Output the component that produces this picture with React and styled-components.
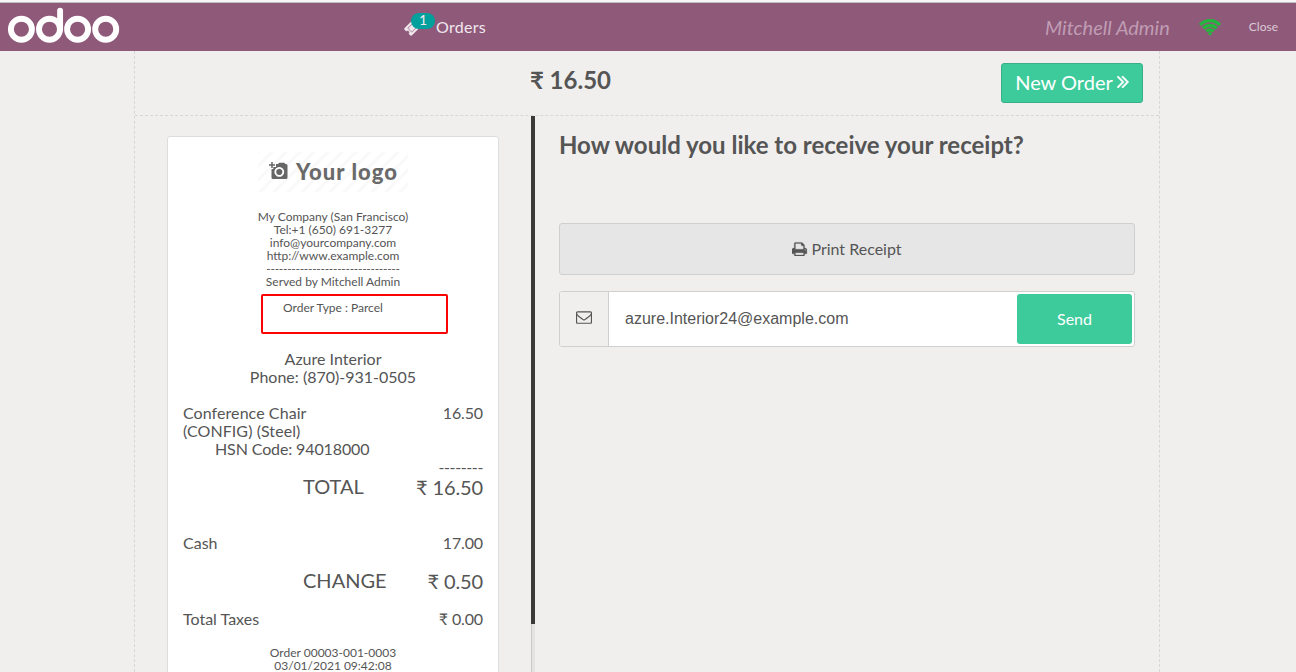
import React from "react";
import styled, { createGlobalStyle } from "styled-components";

const GlobalStyle = createGlobalStyle`
  *, *::before, *::after { box-sizing: border-box; }
  body {
    margin: 0;
    overflow: hidden;
    background: #f0efed;
    color: #555;
    font-family: Lato, "Liberation Sans", sans-serif;
    font-size: 16px;
  }
  button, input { font: inherit; color: inherit; margin: 0; }
`;

const Page = styled.div`
  display: flex;
  flex-direction: column;
  height: 672px;
  overflow: hidden;
  border-top: 2px solid #f6f6f8;
`;

const TopBar = styled.header`
  flex: none;
  display: flex;
  align-items: center;
  height: 49px;
  padding: 0 18px 0 8px;
  background: #8f597a;
  border-top: 1px solid #c0bfc0;
  color: #f0e8ed;
`;

const Logo = styled.svg`
  flex: none;
  width: 112px;
  height: 36px;
  margin: 0 284px 4px 0;
`;

const OrdersButton = styled.div`
  position: relative;
  display: flex;
  align-items: center;
  gap: 5px;
  width: 90px;
  margin-right: auto;
  line-height: 20px;
  white-space: nowrap;
`;

const OrdersLabel = styled.span`
  margin-left: 9px;
  letter-spacing: 0.3px;
`;

const Badge = styled.span`
  position: absolute;
  left: 7px;
  top: -4px;
  width: 24px;
  height: 16px;
  border-radius: 8px;
  background: #00a09d;
  font-size: 14px;
  line-height: 14px;
  text-align: center;
`;

const UserName = styled.span`
  margin-right: 29px;
  font-size: 20px;
  font-style: italic;
  color: #bf9db3;
`;

const CloseLink = styled.span`
  margin: 0 0 2px 28px;
  font-size: 12px;
  color: #dccbd6;
`;

const Icon = styled.svg`
  flex: none;
  display: block;
  fill: currentColor;
  width: ${(p) => p.$w}px;
  height: ${(p) => p.$h || p.$w}px;
`;

const Screen = styled.main`
  flex: 1;
  min-height: 0;
  display: flex;
  flex-direction: column;
  width: 1026px;
  margin-left: 134px;
  border: 1px dashed #d8d7d5;
  border-width: 0 1px;
`;

const ScreenHead = styled.div`
  flex: none;
  display: grid;
  grid-template-columns: 396px 80px 1fr;
  justify-items: end;
  height: 65px;
  padding: 12px 16px 0 0;
  border-bottom: 1px dashed #d8d7d5;
`;

const Amount = styled.h1`
  grid-column: 2;
  margin: 0;
  font-size: 24px;
  line-height: 33px;
  font-weight: 700;
  white-space: nowrap;
`;

const NextButton = styled.button`
  display: flex;
  align-items: center;
  justify-content: center;
  gap: 4px;
  width: 142px;
  height: 40px;
  padding: 0 0 2px;
  border: 1px solid #36af8a;
  border-radius: 3px;
  background: #3ecb9c;
  color: #fff;
  font-size: 20px;
`;

const Columns = styled.div`
  flex: 1;
  min-height: 0;
  display: flex;
`;

const ReceiptPane = styled.section`
  width: 396px;
  padding: 20px 32px 0;
  overflow: hidden;
`;

const ScrollTrack = styled.div`
  width: 4px;
  background: #e3e3e2;
  border-left: 1px solid #c8c8c8;
`;

const ScrollThumb = styled.div`
  width: 4px;
  height: 508px;
  margin-left: -1px;
  background: #3a3a3a;
`;

const Receipt = styled.article`
  position: relative;
  width: 332px;
  height: 700px;
  padding: 15px;
  background: #fff;
  border: 1px solid #dcdcde;
  border-radius: 3px;
`;

const CompanyLogo = styled.svg`
  display: block;
  width: 150px;
  height: 40px;
  margin: 0 auto 18px;
`;

const SmallLines = styled.div`
  margin-top: ${(p) => p.$top || 0}px;
  font-size: 12px;
  line-height: 13px;
  text-align: center;
`;

const Dashes = styled.div`
  letter-spacing: -0.29px;
`;

const Customer = styled.div`
  margin-top: 36px;
  line-height: 18px;
  text-align: center;
`;

const Row = styled.div`
  display: flex;
  justify-content: space-between;
  margin-top: ${(p) => p.$top || 0}px;
  padding-left: ${(p) => p.$indent || 0}px;
  font-size: ${(p) => (p.$large ? 20 : 16)}px;
  line-height: ${(p) => (p.$large ? 22 : 18)}px;
  letter-spacing: ${(p) => p.$tracking || 0}px;
`;

const ProductName = styled.span`
  width: 150px;
  letter-spacing: 0.07px;
`;

const Value = styled.span`
  margin-left: auto;
  padding-top: ${(p) => (p.$drop ? 1 : 0)}px;
  letter-spacing: ${(p) => p.$tracking ?? -0.13}px;
`;

const Highlight = styled.div`
  position: absolute;
  left: 93px;
  top: 157px;
  width: 187px;
  height: 40px;
  border: 2px solid #fb0303;
  border-radius: 2px;
`;

const Options = styled.section`
  flex: 1;
  padding: 13px 24px 0;
`;

const Question = styled.h2`
  margin: 0 0 62px;
  font-size: 24px;
  line-height: 32px;
  font-weight: 700;
`;

const PrintButton = styled.button`
  display: flex;
  align-items: center;
  justify-content: center;
  gap: 3px;
  width: 100%;
  height: 52px;
  padding-bottom: 3px;
  border: 1px solid #cfcfcf;
  border-radius: 3px;
  background: #e6e6e6;
`;

const EmailForm = styled.div`
  display: flex;
  height: 56px;
  margin-top: 16px;
  border: 1px solid #cfcfcf;
  border-radius: 3px;
  background: #fff;
  overflow: hidden;
`;

const EmailIcon = styled.div`
  display: flex;
  align-items: center;
  justify-content: center;
  width: 49px;
  padding-bottom: 4px;
  border-right: 1px solid #cfcfcf;
  background: #f0efed;
`;

const EmailInput = styled.input`
  flex: 1;
  min-width: 0;
  padding: 0 16px 1px;
  border: 0;
  outline: 0;
  background: transparent;
  font-family: "Liberation Sans", Arial, sans-serif;
`;

const SendButton = styled.button`
  width: 115px;
  margin: 2px;
  padding-bottom: 3px;
  border: 0;
  border-radius: 3px;
  background: #3ecb9c;
  color: #fff;
`;

const OdooLogo = () => (
  <Logo viewBox="0 0 112 36" fill="none" stroke="#fff" strokeWidth="5.9">
    {[13.4, 41.5, 69.6, 97.7].map((cx) => (
      <circle key={cx} cx={cx} cy="22.2" r="10.500" />
    ))}
    <path d="M52.100 3.800v18.400" strokeLinecap="round" />
  </Logo>
);

const TicketIcon = () => (
  <Icon $w={18} viewBox="0 0 1792 1792">
    <path stroke="currentColor" strokeWidth="60" d="M1024 452l316 316-572 572-316-316zm-211 979l618-618q19-19 19-45t-19-45l-362-362q-18-18-45-18t-45 18l-618 618q-19 19-19 45t19 45l362 362q18 18 45 18t45-18zm889-637l-907 908q-37 37-90.500 37t-90.500-37l-126-126q56-56 56-136t-56-136-136-56-136 56l-125-126q-37-37-37-90.500t37-90.500l907-906q37-37 90.500-37t90.500 37l125 125q-56 56-56 136t56 136 136 56 136-56l126 125q37 37 37 90.500t-37 90.500z" />
  </Icon>
);

const WifiIcon = () => (
  <Icon $w={22} $h={17} viewBox="0 0 22 17">
    <g fill="none" stroke="#21b83c" strokeWidth="3.200">
      <path d="M1.100 6Q5.300 1.700 11 1.700T20.900 6" />
      <path d="M4.300 9.300Q7.200 6.300 11 6.300t6.700 3" />
      <path d="M7.500 12.400Q9 10.900 11 10.900t3.500 1.500" />
    </g>
    <path fill="#21b83c" d="M11 16.700l-2.400-2.500q2.400-1.700 4.800 0z" />
  </Icon>
);

const AngleDoubleIcon = () => (
  <Icon $w={12} $h={20} viewBox="390 192 990 1536">
    <path stroke="currentColor" strokeWidth="30" d="M979 960q0 13-10 23l-466 466q-10 10-23 10t-23-10l-50-50q-10-10-10-23t10-23l393-393-393-393q-10-10-10-23t10-23l50-50q10-10 23-10t23 10l466 466q10 10 10 23zm384 0q0 13-10 23l-466 466q-10 10-23 10t-23-10l-50-50q-10-10-10-23t10-23l393-393-393-393q-10-10-10-23t10-23l50-50q10-10 23-10t23 10l466 466q10 10 10 23z" />
  </Icon>
);

const PrintIcon = () => (
  <Icon $w={16} $h={16} viewBox="64 -140 1792 1792">
    <path stroke="currentColor" strokeWidth="30" d="M448 1536h896v-256h-896v256zm0-640h896v-384h-160q-40 0-68-28t-28-68v-160h-640v640zm1152 64q0-26-19-45t-45-19-45 19-19 45 19 45 45 19 45-19 19-45zm128 0v416q0 13-9.500 22.500t-22.500 9.500h-224v160q0 40-28 68t-68 28h-960q-40 0-68-28t-28-68v-160h-224q-13 0-22.500-9.500t-9.500-22.500v-416q0-79 56.500-135.500t135.500-56.500h64v-544q0-40 28-68t68-28h672q40 0 88 20t76 48l152 152q28 28 48 76t20 88v256h64q79 0 135.500 56.500t56.500 135.500z" />
  </Icon>
);

const EnvelopeIcon = () => (
  <Icon $w={16} viewBox="0 0 1792 1792">
    <path d="M1664 1504v-768q-32 36-69 66-268 206-426 338-51 43-83 67t-86.500 48.500-102.500 24.500h-2q-48 0-102.500-24.500t-86.500-48.500-83-67q-158-132-426-338-37-30-69-66v768q0 13 9.500 22.500t22.500 9.500h1472q13 0 22.500-9.500t9.500-22.500zm0-1051v-24.500l-.5-13-3-12.500-5.500-9-9-7.500-14-2.500h-1472q-13 0-22.500 9.500t-9.500 22.500q0 168 147 284 193 152 401 317 6 5 35 29.500t46 37.500 44.500 31.500 50.500 27.500 43 9h2q20 0 43-9t50.500-27.500 44.500-31.500 46-37.500 35-29.500q208-165 401-317 54-43 100.500-115.500t46.500-131.500zm128-37v1088q0 66-47 113t-113 47h-1472q-66 0-113-47t-47-113v-1088q0-66 47-113t113-47h1472q66 0 113 47t47 113z" />
  </Icon>
);

const YourLogo = () => (
  <CompanyLogo viewBox="0 0 150 40">
    <defs>
      <pattern id="hatch" width="14" height="14" patternUnits="userSpaceOnUse">
        <path d="M-3.500 3.500l7-7M0 14L14 0M10.500 17.500l7-7" stroke="#f9f9f9" strokeWidth="3" />
      </pattern>
    </defs>
    <rect width="150" height="40" fill="url(#hatch)" />
    <path d="M14 10v6M11 13h6" stroke="#666" strokeWidth="1.500" />
    <path
      fill="#666"
      fillRule="evenodd"
      d="M18 12h2l1.200-1.200h5L27.500 12H28q1.500 0 1.500 1.500v12q0 1.500-1.500 1.500H15q-1.500 0-1.500-1.500V17h1.800v-2H18zM21.300 15a4.900 4.900 0 1 0 .01 0zM21.300 16.800a3.100 3.100 0 1 1-.01 0z"
    />
    <circle cx="21.300" cy="19.900" r="1.600" fill="#666" />
    <text x="38" y="28" fill="#6a6a6a" fontFamily="Lato" fontWeight="900" fontSize="22" textLength="101">
      Your logo
    </text>
  </CompanyLogo>
);

export default function App() {
  return (
    <Page>
      <GlobalStyle />
      <TopBar>
        <OdooLogo />
        <OrdersButton>
          <TicketIcon />
          <Badge>1</Badge>
          <OrdersLabel>Orders</OrdersLabel>
        </OrdersButton>
        <UserName>Mitchell Admin</UserName>
        <WifiIcon />
        <CloseLink>Close</CloseLink>
      </TopBar>
      <Screen>
        <ScreenHead>
          <Amount>₹ 16.50</Amount>
          <NextButton>
            New Order <AngleDoubleIcon />
          </NextButton>
        </ScreenHead>
        <Columns>
          <ReceiptPane>
            <Receipt>
              <YourLogo />
              <SmallLines>
                <div>My Company (San Francisco)</div>
                <div>Tel:+1 (650) 691-3277</div>
                <div>info@yourcompany.com</div>
                <div>http://www.example.com</div>
                <Dashes>--------------------------------</Dashes>
                <div>Served by Mitchell Admin</div>
              </SmallLines>
              <SmallLines $top={13}>Order Type : Parcel</SmallLines>
              <Customer>
                <div>Azure Interior</div>
                <div>Phone: (870)-931-0505</div>
              </Customer>
              <Row $top={18}>
                <ProductName>Conference Chair (CONFIG) (Steel)</ProductName>
                <Value>16.50</Value>
              </Row>
              <Row $indent={32} $tracking={-0.12}>HSN Code: 94018000</Row>
              <Row>
                <Value $tracking={-0.38}>--------</Value>
              </Row>
              <Row $top={-1} $large $indent={120}>
                TOTAL <Value $drop>₹ 16.50</Value>
              </Row>
              <Row $top={36}>
                Cash <Value>17.00</Value>
              </Row>
              <Row $top={17} $large $indent={120}>
                CHANGE <Value $drop>₹ 0.50</Value>
              </Row>
              <Row $top={18}>
                Total Taxes <Value>₹ 0.00</Value>
              </Row>
              <SmallLines $top={18}>
                <div>Order 00003-001-0003</div>
                <div>03/01/2021 09:42:08</div>
              </SmallLines>
              <Highlight />
            </Receipt>
          </ReceiptPane>
          <ScrollTrack>
            <ScrollThumb />
          </ScrollTrack>
          <Options>
            <Question>How would you like to receive your receipt?</Question>
            <PrintButton>
              <PrintIcon /> Print Receipt
            </PrintButton>
            <EmailForm>
              <EmailIcon>
                <EnvelopeIcon />
              </EmailIcon>
              <EmailInput defaultValue="azure.Interior24@example.com" />
              <SendButton>Send</SendButton>
            </EmailForm>
          </Options>
        </Columns>
      </Screen>
    </Page>
  );
}
